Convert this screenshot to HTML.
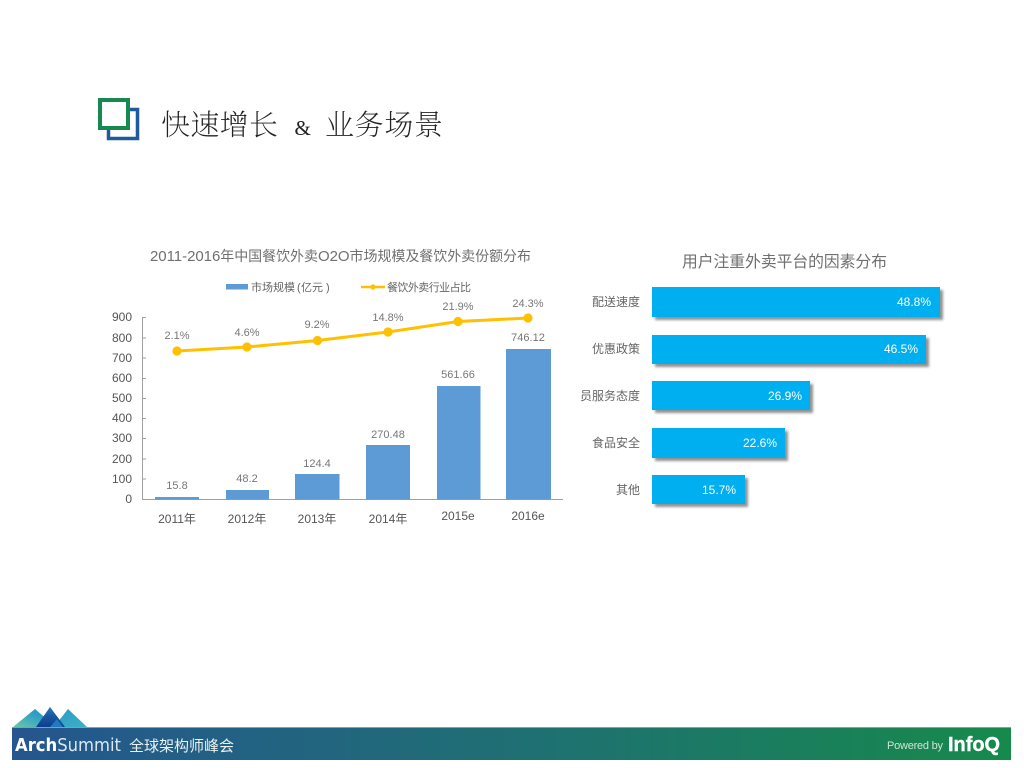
<!DOCTYPE html>
<html lang="zh">
<head>
<meta charset="utf-8">
<title>快速增长 &amp; 业务场景</title>
<style>
html,body{margin:0;padding:0;background:#fff;width:1024px;height:768px;overflow:hidden}
svg{display:block}
text{font-family:"Liberation Sans","Noto Sans CJK SC",sans-serif}
.ax{font-size:12px;fill:#555}
.dl{font-size:11px;fill:#777;text-anchor:middle}
.cat{font-size:12px;fill:#555;text-anchor:middle}
.lab{font-size:12px;fill:#666;text-anchor:end}
.val{font-size:12px;fill:#fff;text-anchor:end}
.ttl{font-family:"Noto Serif CJK SC","Liberation Serif",serif;font-size:29px;font-weight:200;fill:#222}
</style>
</head>
<body>
<svg width="1024" height="768" viewBox="0 0 1024 768" xmlns="http://www.w3.org/2000/svg">
<defs>
<linearGradient id="foot" x1="0" x2="1" y1="0" y2="0">
<stop offset="0" stop-color="#25568f"/>
<stop offset="0.5" stop-color="#1f6f74"/>
<stop offset="1" stop-color="#168a4b"/>
</linearGradient>
<linearGradient id="mtnL" x1="0" x2="1" y1="1" y2="0">
<stop offset="0" stop-color="#6cc7a8"/>
<stop offset="0.6" stop-color="#2f9fc6"/>
<stop offset="1" stop-color="#2490c4"/>
</linearGradient>
<linearGradient id="mtnR" x1="0" x2="1" y1="0" y2="1">
<stop offset="0" stop-color="#2a9ac6"/>
<stop offset="1" stop-color="#3cb2c4"/>
</linearGradient>
<linearGradient id="mtnC" x1="0" x2="0" y1="0" y2="1">
<stop offset="0" stop-color="#2a78b8"/>
<stop offset="0.5" stop-color="#15569f"/>
<stop offset="1" stop-color="#0f3f90"/>
</linearGradient>
<filter id="sh" x="-10%" y="-20%" width="120%" height="150%">
<feGaussianBlur stdDeviation="1.3"/>
</filter>
<filter id="soft" x="-5%" y="-5%" width="110%" height="110%">
<feGaussianBlur stdDeviation="0.35"/>
</filter>
</defs>

<!-- Title icon -->
<rect x="108.500" y="109.500" width="29" height="29" fill="none" stroke="#1f5a9e" stroke-width="3.500"/>
<rect x="100" y="100" width="28" height="28" fill="#fff" stroke="#17894f" stroke-width="4"/>

<!-- Title -->
<g filter="url(#soft)">
<text class="ttl" x="161" y="135" textLength="117" lengthAdjust="spacing">快速增长</text>
<text class="ttl" x="294.500" y="135" style="font-size:21px;font-family:'Liberation Serif',serif;font-weight:400">&amp;</text>
<text class="ttl" x="325" y="135" textLength="118" lengthAdjust="spacing">业务场景</text>
</g>

<g filter="url(#soft)">
<!-- Left chart title and legend -->
<text x="150" y="261" font-size="14" fill="#6f6f6f" textLength="381" lengthAdjust="spacing"><tspan font-size="15">2011-2016</tspan>年中国餐饮外卖<tspan font-size="15">O2O</tspan>市场规模及餐饮外卖份额分布</text>
<rect x="226" y="284" width="22" height="5.500" fill="#5b9bd5"/>
<text x="251" y="291" font-size="11" fill="#666">市场规模</text>
<text x="297" y="291" font-size="11" fill="#666">(</text>
<text x="301" y="291" font-size="11" fill="#666">亿元</text>
<text x="326" y="291" font-size="11" fill="#666">)</text>
<line x1="361" y1="287" x2="385" y2="287" stroke="#ffc000" stroke-width="2.600"/>
<circle cx="373" cy="287" r="2.600" fill="#ffc000"/>
<text x="387" y="291" font-size="11" fill="#666" textLength="84" lengthAdjust="spacing">餐饮外卖行业占比</text>

<!-- Axis -->
<g stroke="#a0a0a0" stroke-width="1" fill="none">
<path d="M142.500 317V499.500H563"/>
<path d="M142 317.500h4M142 338h4M142 358h4M142 378.500h4M142 398.500h4M142 418.500h4M142 438.500h4M142 459h4M142 479h4"/>
</g>
<g class="ax" text-anchor="end">
<text x="132" y="321">900</text>
<text x="132" y="342">800</text>
<text x="132" y="362">700</text>
<text x="132" y="382">600</text>
<text x="132" y="402">500</text>
<text x="132" y="422">400</text>
<text x="132" y="442">300</text>
<text x="132" y="463">200</text>
<text x="132" y="483">100</text>
<text x="132" y="503">0</text>
</g>

<!-- Bars -->
<g fill="#5b9bd5">
<rect x="155" y="497" width="44" height="2.500"/>
<rect x="226" y="490" width="43" height="9.500"/>
<rect x="295" y="474" width="44.500" height="25.500"/>
<rect x="366" y="445" width="44" height="54.500"/>
<rect x="437" y="386" width="43.500" height="113.500"/>
<rect x="506" y="349" width="45" height="150.500"/>
</g>

<!-- Bar labels -->
<text class="dl" x="177" y="489">15.8</text>
<text class="dl" x="247" y="482">48.2</text>
<text class="dl" x="317" y="467">124.4</text>
<text class="dl" x="388" y="438">270.48</text>
<text class="dl" x="458" y="378">561.66</text>
<text class="dl" x="528" y="341">746.12</text>

<!-- Line -->
<polyline points="177,351 247,347 317.500,340.500 388,332 458,321.500 528,318" fill="none" stroke="#ffc000" stroke-width="3"/>
<g fill="#ffc000">
<circle cx="177" cy="351" r="4.600"/>
<circle cx="247" cy="347" r="4.600"/>
<circle cx="317.500" cy="340.500" r="4.600"/>
<circle cx="388" cy="332" r="4.600"/>
<circle cx="458" cy="321.500" r="4.600"/>
<circle cx="528" cy="318" r="4.600"/>
</g>
<text class="dl" x="177" y="339">2.1%</text>
<text class="dl" x="247" y="336">4.6%</text>
<text class="dl" x="317" y="328">9.2%</text>
<text class="dl" x="388" y="321">14.8%</text>
<text class="dl" x="458" y="310">21.9%</text>
<text class="dl" x="528" y="307">24.3%</text>

<!-- Categories -->
<text class="cat" x="177" y="523">2011年</text>
<text class="cat" x="247" y="523">2012年</text>
<text class="cat" x="317" y="523">2013年</text>
<text class="cat" x="388" y="523">2014年</text>
<text class="cat" x="458" y="520">2015e</text>
<text class="cat" x="528" y="520">2016e</text>

<!-- Right chart -->
<text x="682" y="267" font-size="15.800" fill="#6f6f6f" textLength="205" lengthAdjust="spacing">用户注重外卖平台的因素分布</text>

<g fill="#777" opacity="0.8" filter="url(#sh)">
<rect x="655" y="290" width="288" height="30"/>
<rect x="655" y="338" width="274" height="29"/>
<rect x="655" y="384" width="158" height="29"/>
<rect x="655" y="431" width="133" height="30"/>
<rect x="655" y="478" width="93" height="29"/>
</g>
<g fill="#00aff0">
<rect x="652" y="287" width="288" height="30"/>
<rect x="652" y="335" width="274" height="29"/>
<rect x="652" y="381" width="158" height="29"/>
<rect x="652" y="428" width="133" height="30"/>
<rect x="652" y="475" width="93" height="29"/>
</g>
<text class="val" x="931" y="306">48.8%</text>
<text class="val" x="918" y="353">46.5%</text>
<text class="val" x="802" y="400">26.9%</text>
<text class="val" x="777" y="447">22.6%</text>
<text class="val" x="736" y="494">15.7%</text>

<text class="lab" x="640" y="306">配送速度</text>
<text class="lab" x="640" y="353">优惠政策</text>
<text class="lab" x="640" y="400">员服务态度</text>
<text class="lab" x="640" y="447">食品安全</text>
<text class="lab" x="640" y="494">其他</text>
</g>

<!-- Footer logo mountains -->
<g filter="url(#soft)">
<polygon points="13,727 35,709 56,727" fill="url(#mtnL)"/>
<polygon points="54,727 68,709 87,727" fill="url(#mtnR)"/>
<polygon points="36,727 50,707 65,727" fill="url(#mtnC)"/>
<polygon points="50,727 57,719 63,727" fill="#2379bd"/>
</g>

<!-- Footer bar -->
<rect x="12" y="727" width="999" height="33" fill="url(#foot)"/>
<rect x="12" y="727" width="999" height="1" fill="#7ea5a5"/>
<g filter="url(#soft)">
<text x="15" y="751" style="font-family:'DejaVu Sans',sans-serif" font-size="17.500" fill="#fff" textLength="106" lengthAdjust="spacingAndGlyphs"><tspan font-weight="bold">Arch</tspan><tspan fill="#dbe8ee">Summit</tspan></text>
<text x="129" y="751" font-size="15" fill="#eaf2f2">全球架构师峰会</text>
<text x="887" y="749" font-size="11" fill="#cfe4d6" textLength="56" lengthAdjust="spacing">Powered by</text>
<text x="948" y="751" font-size="20" font-weight="bold" fill="#fff" stroke="#fff" stroke-width="0.400" textLength="52" lengthAdjust="spacingAndGlyphs">InfoQ</text>
</g>
</svg>
</body>
</html>
